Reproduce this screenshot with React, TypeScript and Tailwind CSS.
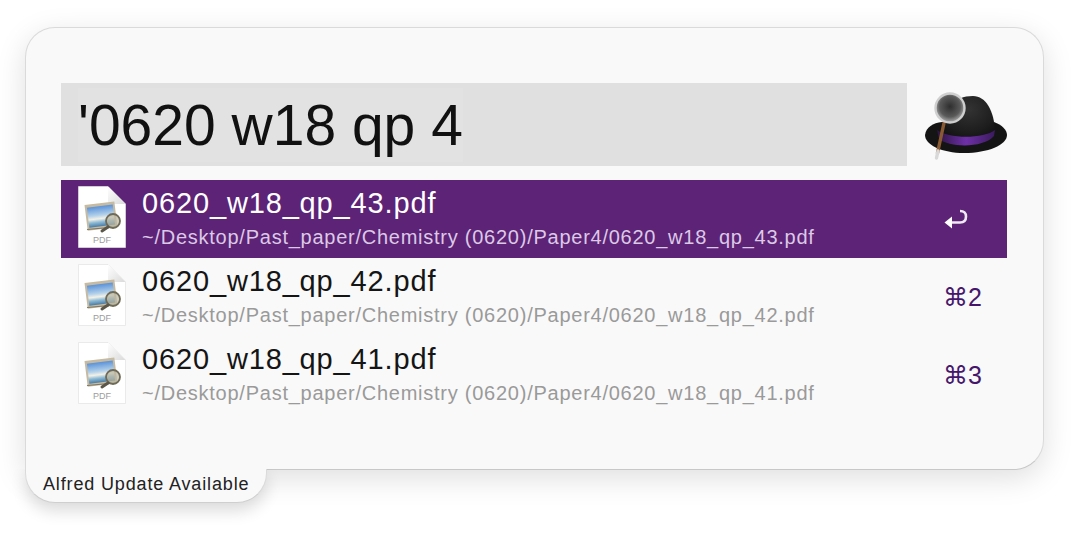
import React from "react";

function PdfIcon() {
  return (
    <svg width="48" height="62" viewBox="0 0 48 62" className="mb-[5px] shrink-0">
      <defs>
        <linearGradient id="sky" x1="0" y1="0" x2="0" y2="1">
          <stop offset="0" stopColor="#5c92d8" />
          <stop offset="0.45" stopColor="#b4d2ea" />
          <stop offset="0.62" stopColor="#f4f1e6" />
          <stop offset="0.78" stopColor="#8fbcd6" />
          <stop offset="1" stopColor="#4a7ca6" />
        </linearGradient>
        <linearGradient id="fold" x1="0" y1="0" x2="1" y2="1">
          <stop offset="0" stopColor="#ffffff" />
          <stop offset="1" stopColor="#dadada" />
        </linearGradient>
      </defs>
      <path d="M0.5 0.5H30L47.5 18V61.5H0.5Z" fill="#ffffff" stroke="#e2e2e2" strokeWidth="0.7" />
      <path d="M30 0.5L47.5 18H32Q30 18 30 16Z" fill="url(#fold)" />
      <g transform="rotate(-7 24 30)">
        <rect x="8" y="17" width="30" height="26" fill="#c6bba2" />
        <rect x="10" y="20" width="26" height="20" fill="url(#sky)" />
      </g>
      <path d="M9 43.5L37 41" stroke="#7d7663" strokeWidth="1.2" />
      <circle cx="35" cy="35" r="7" fill="#b9b5a0" fillOpacity="0.7" stroke="#6f6a57" strokeWidth="1.8" />
      <path d="M30 41L24 45" stroke="#5a564a" strokeWidth="3" strokeLinecap="round" />
      <text x="24" y="57" textAnchor="middle" fontSize="9" fill="#9c9c9c" fontFamily="Liberation Sans, sans-serif">PDF</text>
    </svg>
  );
}

function HatLogo() {
  return (
    <svg width="90" height="72" viewBox="0 0 90 72" className="shrink-0">
      <defs>
        <radialGradient id="crown" cx="0.5" cy="0.3" r="0.8">
          <stop offset="0" stopColor="#333333" />
          <stop offset="0.6" stopColor="#1e1e1e" />
          <stop offset="1" stopColor="#0d0d0d" />
        </radialGradient>
        <radialGradient id="glass" cx="0.5" cy="0.45" r="0.55">
          <stop offset="0" stopColor="#2e2e2e" />
          <stop offset="0.65" stopColor="#5a5a5a" />
          <stop offset="1" stopColor="#b0b0b0" />
        </radialGradient>
        <linearGradient id="band" x1="0" y1="0" x2="1" y2="0">
          <stop offset="0" stopColor="#2a1440" />
          <stop offset="0.5" stopColor="#6f30a8" />
          <stop offset="1" stopColor="#3a1a5c" />
        </linearGradient>
      </defs>
      <path d="M7 46C8 38 15 34 24 33H76C84 36 89 41 89 46C89 56 70 64 46 64C24 64 7 56 7 46Z" fill="#141414" />
      <path d="M24 44C24 20 36 7 55 7C68 7 76 22 77 42C72 54 30 56 24 44Z" fill="url(#crown)" />
      <path d="M19 41C30 50 66 50 77 41L76 47C66 59 32 59 21 50Z" fill="url(#band)" />
      <path d="M26 34L19.5 64" stroke="#8a5a32" strokeWidth="3.4" strokeLinecap="round" />
      <path d="M20 62L18.5 69" stroke="#d8d8d8" strokeWidth="3.4" strokeLinecap="round" />
      <circle cx="32" cy="19" r="14.5" fill="url(#glass)" stroke="#cfcfcf" strokeWidth="2.4" />
    </svg>
  );
}

function ReturnIcon() {
  return (
    <svg width="24" height="20" viewBox="0 0 24 20" className="ml-auto mr-[15px]">
      <path d="M6 13.5H16Q22 13.5 22 7.5Q22 2 16 2" fill="none" stroke="#ffffff" strokeOpacity="0.9" strokeWidth="2.6" />
      <path d="M0.5 13.5L8 7.5V19.5Z" fill="#ffffff" />
    </svg>
  );
}

const rows = [
  { name: "0620_w18_qp_43.pdf", path: "~/Desktop/Past_paper/Chemistry (0620)/Paper4/0620_w18_qp_43.pdf", key: "", selected: true },
  { name: "0620_w18_qp_42.pdf", path: "~/Desktop/Past_paper/Chemistry (0620)/Paper4/0620_w18_qp_42.pdf", key: "⌘2", selected: false },
  { name: "0620_w18_qp_41.pdf", path: "~/Desktop/Past_paper/Chemistry (0620)/Paper4/0620_w18_qp_41.pdf", key: "⌘3", selected: false },
];

export default function App() {
  return (
    <div className="h-[535px] w-[1080px] overflow-hidden bg-white pl-[25px] pt-[27px] font-['Liberation_Sans',sans-serif]">
      <div className="relative h-[443px] w-[1019px] rounded-[30px] rounded-bl-none border border-[#dadada] border-b-[#c8c8c8] bg-[#f9f9f9] px-[35px] pt-[55px] shadow-[0_8px_30px_rgba(0,0,0,0.13)]">
        <div className="flex items-center justify-between">
          <div className="flex h-[83px] w-[846px] items-center bg-[#e0e0e0] pl-[17px]">
            <span className="bg-[#e2e2e2] text-[57px] leading-[74px] text-[#111111]">'0620 w18 qp 4</span>
          </div>
          <HatLogo />
        </div>
        <div className="mt-[14px] flex w-[946px] flex-col">
          {rows.map((r) => (
            <div
              key={r.name}
              className={`flex h-[78px] items-center pl-[17px] pr-[24px] ${r.selected ? "bg-[#5c2376]" : ""}`}
            >
              <PdfIcon />
              <div className="mb-[2px] ml-[16px] flex min-w-0 flex-1 flex-col gap-[4px]">
                <span className={`text-[29px] leading-[33px] tracking-[0.85px] ${r.selected ? "text-white" : "text-[#151515]"}`}>
                  {r.name}
                </span>
                <span className={`text-[20px] leading-[26px] tracking-[0.75px] ${r.selected ? "text-[#dcc9e6]" : "text-[#9a9a9a]"}`}>
                  {r.path}
                </span>
              </div>
              <div className="flex w-[40px] items-center">
                {r.selected ? (
                  <ReturnIcon />
                ) : (
                  <span className="font-['Liberation_Sans','DejaVu_Sans',sans-serif] text-[25px] leading-none text-[#45166b]">{r.key}</span>
                )}
              </div>
            </div>
          ))}
        </div>
        <div className="absolute -left-px top-[440px] flex h-[35px] w-[242px] items-center rounded-b-[30px] border-x border-b border-x-[#dadada] border-b-[#cfcfcf] bg-[#f9f9f9] pl-[17px] shadow-[0_8px_16px_rgba(0,0,0,0.14)] [clip-path:inset(1px_-40px_-40px_-40px)]">
          <span className="mb-[3px] text-[18px] leading-none tracking-[0.85px] text-[#222222]">Alfred Update Available</span>
        </div>
      </div>
    </div>
  );
}
